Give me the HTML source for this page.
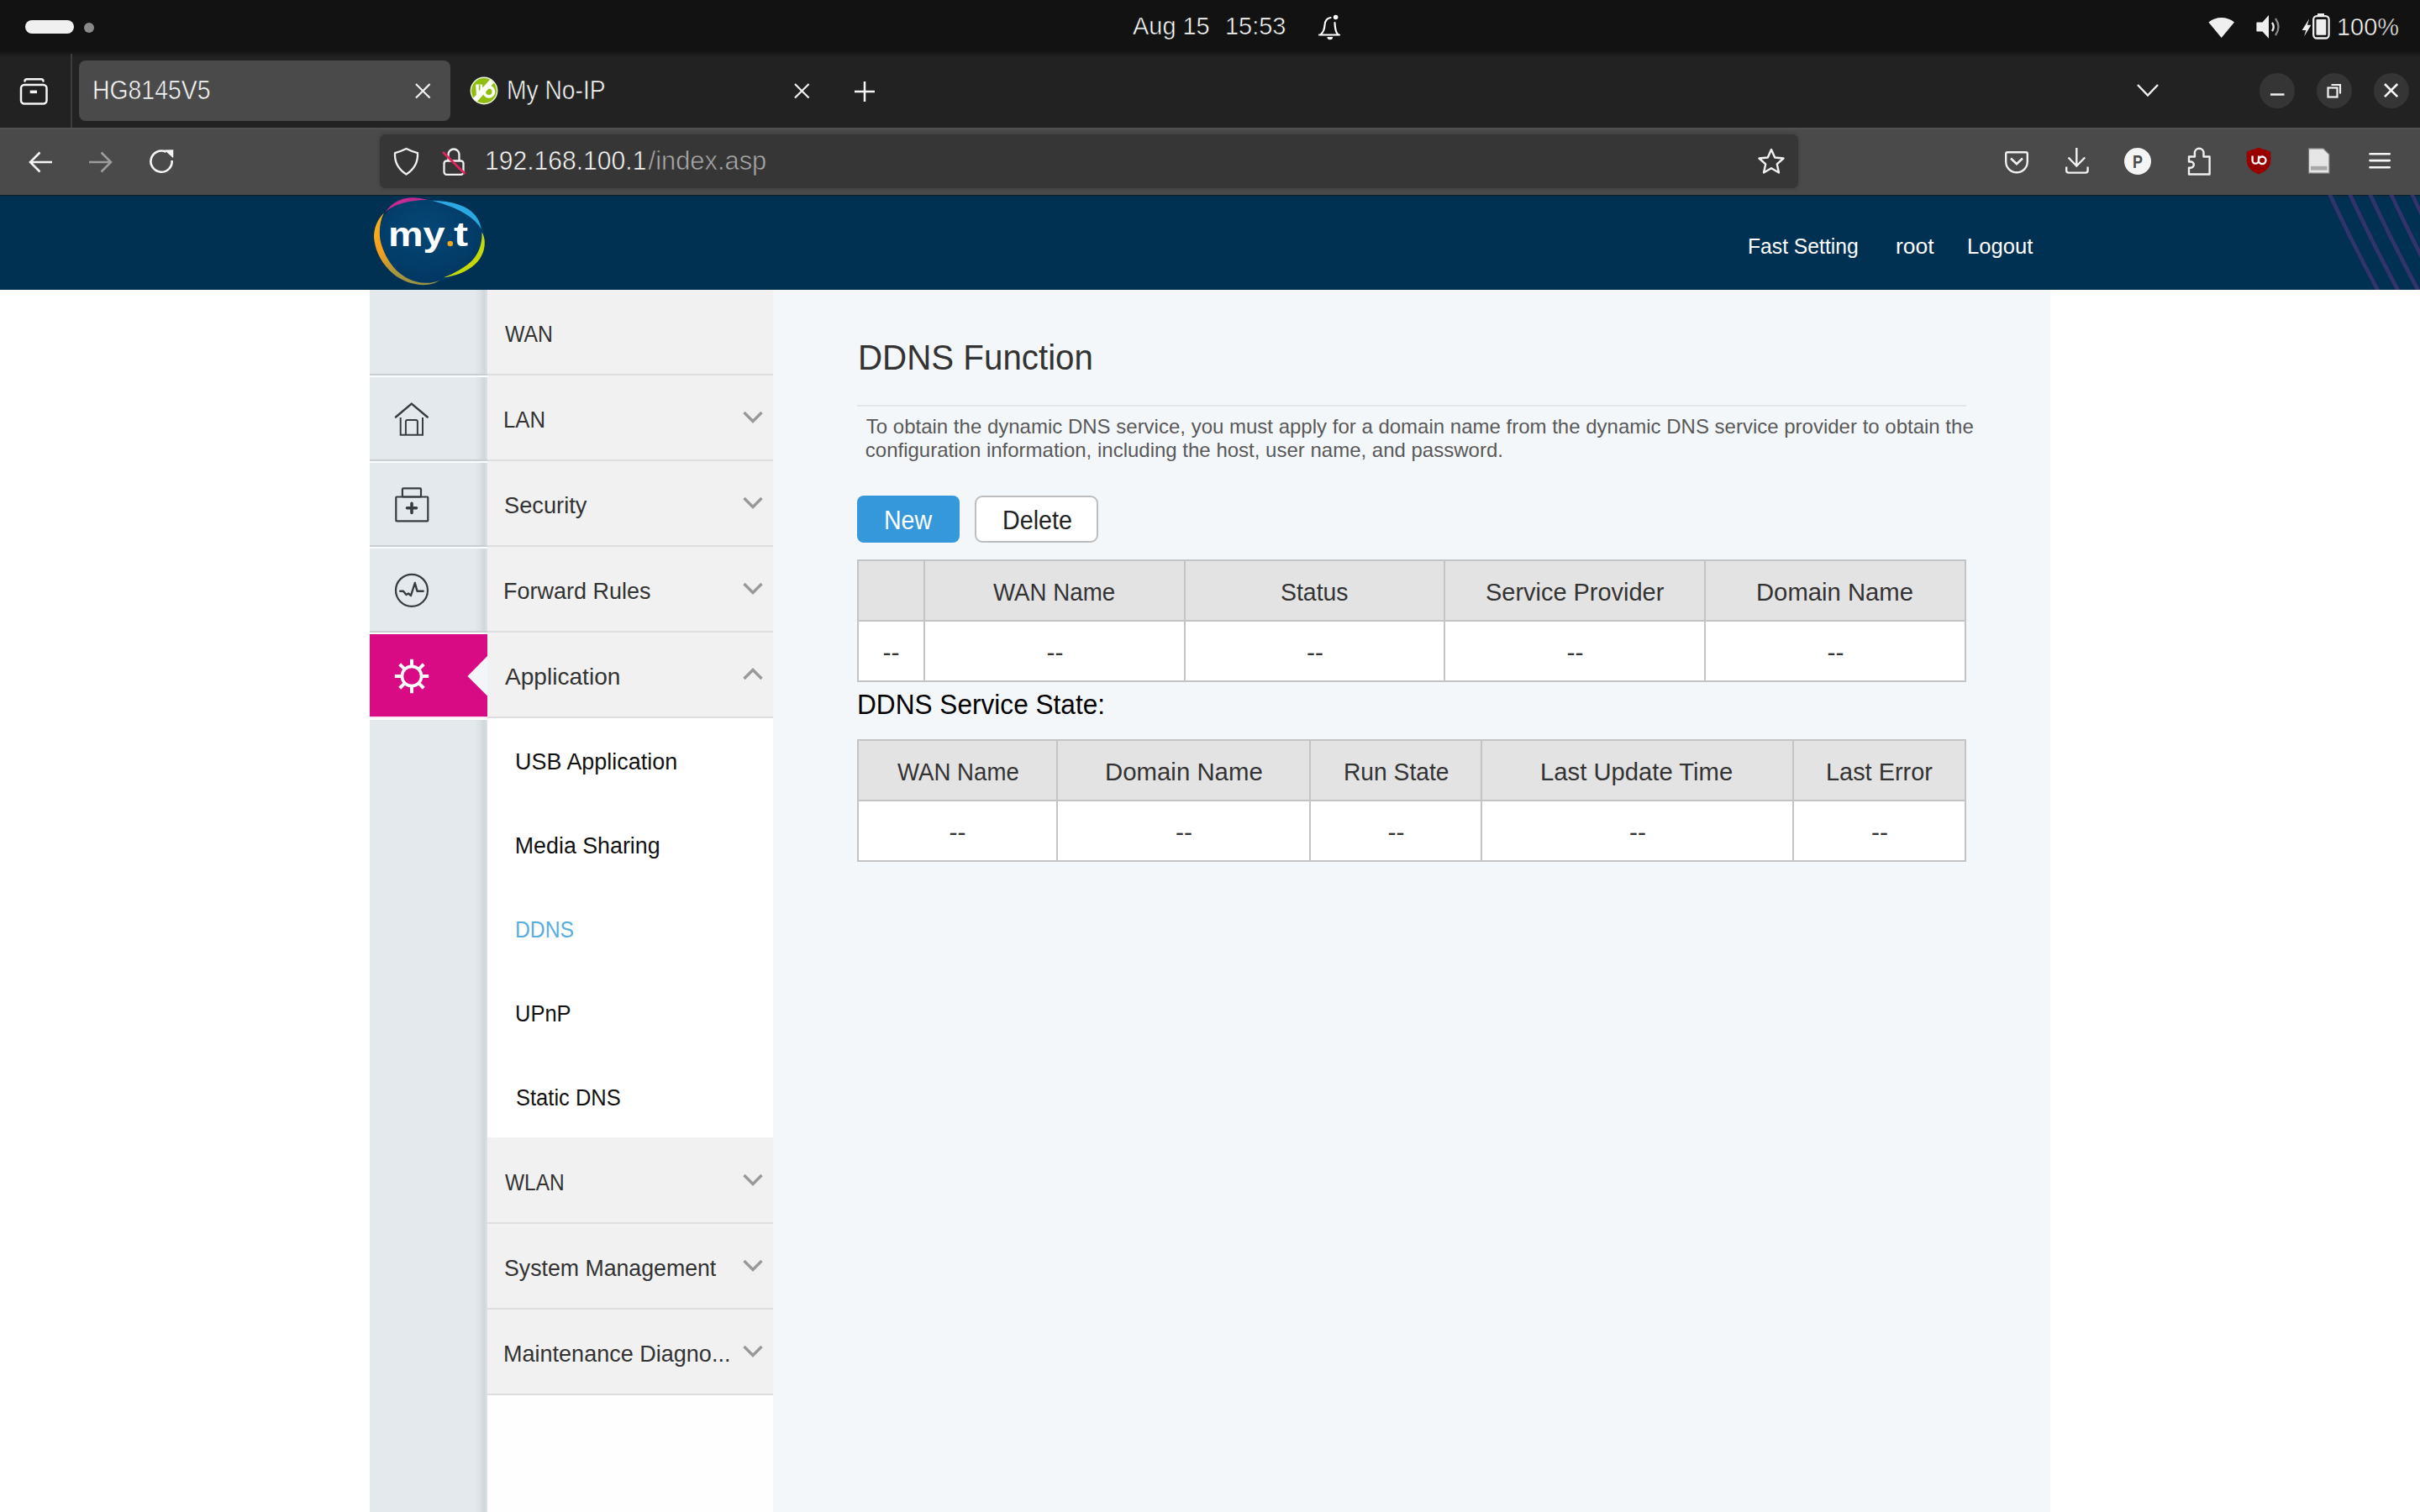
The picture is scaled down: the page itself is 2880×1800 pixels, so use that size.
<!DOCTYPE html>
<html><head><meta charset="utf-8"><title>HG8145V5</title>
<style>
html,body{margin:0;padding:0;}
body{width:2880px;height:1800px;overflow:hidden;position:relative;background:#fff;font-family:"Liberation Sans",sans-serif;}
.t{position:absolute;white-space:nowrap;transform-origin:0 0;font-family:"Liberation Sans",sans-serif;}
svg{overflow:visible}
</style></head><body>
<div style="position:absolute;left:0px;top:0px;width:2880px;height:63px;background:#121212;"></div>
<div style="position:absolute;left:30px;top:24px;width:58px;height:16px;background:#f0f0f0;border-radius:8px"></div>
<div style="position:absolute;left:100px;top:27px;width:12px;height:12px;background:#8a8a8a;border-radius:50%"></div>
<svg style="position:absolute;left:1566px;top:14px;" width="32" height="36" viewBox="0 0 32 36"><g fill="none" stroke="#fff" stroke-width="2.2" stroke-linecap="round"><path d="M4,27.5 H28"/><path d="M6,27 Q10,23 10.5,16 Q11,8 17.5,7"/><path d="M22.5,13 Q22.8,23 26,27"/></g><path d="M13.5,30 A3.3,3.3 0 0 0 20.1,30 Z" fill="#fff"/><circle cx="23.6" cy="6.5" r="2.8" fill="#fff"/></svg>
<svg style="position:absolute;left:2626px;top:17px;" width="36" height="30" viewBox="0 0 36 30"><path d="M17.7,28 L2.4,9.6 A24,24 0 0 1 33,9.6 Z" fill="#efefef"/></svg>
<svg style="position:absolute;left:2683px;top:16px;" width="34" height="32" viewBox="0 0 34 32"><path d="M3,10.5 H9.5 L17,2 V29.7 L9.5,21.5 H3 Q2,21.5 2.5,16 Q2,10.5 3,10.5 Z" fill="#efefef"/><path d="M21,11 Q24.5,16 21,21" fill="none" stroke="#efefef" stroke-width="2.3"/><path d="M25,6 Q32,16 25,26" fill="none" stroke="#8a8a8a" stroke-width="2.3"/></svg>
<svg style="position:absolute;left:2738px;top:14px;" width="38" height="34" viewBox="0 0 38 34"><path d="M10.2,8.3 L1.6,22 H6.3 L4.2,29.3 L12.4,15.8 H7.9 Z" fill="#efefef"/><rect x="20" y="2" width="8" height="3.2" fill="#efefef"/><rect x="15.2" y="5.2" width="18.4" height="26.3" rx="4" fill="none" stroke="#efefef" stroke-width="2.3"/><rect x="18.5" y="9" width="11.8" height="18.8" rx="1" fill="#efefef"/></svg>
<div style="position:absolute;left:0px;top:63px;width:2880px;height:89px;background:#222222;"></div>
<div style="position:absolute;left:0px;top:60px;width:2880px;height:8px;background:linear-gradient(#121212, #222222);"></div>
<svg style="position:absolute;left:20px;top:88px;" width="40" height="40" viewBox="0 0 40 40"><g fill="none" stroke="#f5f5f5" stroke-width="2.5" stroke-linecap="round"><rect x="5" y="13" width="30.5" height="22.5" rx="4"/><path d="M9.5,8.5 Q9.5,6.2 12,6.2 H29 Q31.5,6.2 31.5,8.5"/></g><rect x="15.7" y="19.6" width="8.3" height="3.5" fill="#f5f5f5"/></svg>
<div style="position:absolute;left:84px;top:64px;width:2px;height:88px;background:#3c3c3c;"></div>
<div style="position:absolute;left:94px;top:72px;width:442px;height:72px;background:#4a4a4a;border-radius:8px"></div>
<svg style="position:absolute;left:492.2px;top:96.7px;" width="22.6" height="22.6" viewBox="0 0 22.6 22.6"><path d="M3,3 L19.6,19.6 M19.6,3 L3,19.6" stroke="#f0f0f0" stroke-width="2.2" fill="none"/></svg>
<svg style="position:absolute;left:556px;top:88px;" width="40" height="40" viewBox="0 0 40 40"><circle cx="20" cy="20" r="15.7" fill="#8fbd10" stroke="#f0f8dc" stroke-width="1.4"/><path d="M10.2,12.5 H18 L19,24 L11,27 Z" fill="#fbfff5"/><rect x="13.8" y="13" width="1.6" height="6.5" fill="#8fbd10"/><path d="M9,31.5 L29.5,8.5" stroke="#fbfff5" stroke-width="6.2"/><circle cx="25.8" cy="21.2" r="5.6" fill="none" stroke="#fbfff5" stroke-width="3.8"/></svg>
<svg style="position:absolute;left:942.7px;top:96.7px;" width="22.6" height="22.6" viewBox="0 0 22.6 22.6"><path d="M3,3 L19.6,19.6 M19.6,3 L3,19.6" stroke="#f0f0f0" stroke-width="2.2" fill="none"/></svg>
<svg style="position:absolute;left:1014px;top:94px;" width="30" height="30" viewBox="0 0 30 30"><path d="M15,3 V27 M3,15 H27" stroke="#f5f5f5" stroke-width="2.5"/></svg>
<svg style="position:absolute;left:2540px;top:96px;" width="32" height="24" viewBox="0 0 32 24"><path d="M4,5 L16,17.5 L28,5" stroke="#f0f0f0" stroke-width="2.5" fill="none"/></svg>
<div style="position:absolute;left:2689px;top:87px;width:42px;height:42px;background:#353535;border-radius:50%"></div>
<div style="position:absolute;left:2757px;top:87px;width:42px;height:42px;background:#353535;border-radius:50%"></div>
<div style="position:absolute;left:2825px;top:87px;width:42px;height:42px;background:#353535;border-radius:50%"></div>
<svg style="position:absolute;left:2698px;top:100px;" width="24" height="20" viewBox="0 0 24 20"><path d="M4,12.5 H20.5" stroke="#f0f0f0" stroke-width="2.5"/></svg>
<svg style="position:absolute;left:2766px;top:96px;" width="24" height="24" viewBox="0 0 24 24"><rect x="4.5" y="8.5" width="11" height="11" fill="none" stroke="#f0f0f0" stroke-width="2.2"/><path d="M8.5,5 H19 V15.5" fill="none" stroke="#f0f0f0" stroke-width="2.2"/></svg>
<svg style="position:absolute;left:2835.4px;top:97.4px;" width="21.2" height="21.2" viewBox="0 0 21.2 21.2"><path d="M3,3 L18.2,18.2 M18.2,3 L3,18.2" stroke="#f5f5f5" stroke-width="2.6" fill="none"/></svg>
<div style="position:absolute;left:0px;top:152px;width:2880px;height:80px;background:#4a4a4a;"></div>
<div style="position:absolute;left:0px;top:152px;width:2880px;height:2px;background:#515151;"></div>
<svg style="position:absolute;left:30px;top:176px;" width="36" height="34" viewBox="0 0 36 34"><path d="M6,17 H32 M17.5,5.5 L6,17 L17.5,28.5" stroke="#f5f5f5" stroke-width="2.6" fill="none"/></svg>
<svg style="position:absolute;left:102px;top:176px;" width="36" height="34" viewBox="0 0 36 34"><path d="M4,17 H30 M18.5,5.5 L30,17 L18.5,28.5" stroke="#9c9c9c" stroke-width="2.6" fill="none"/></svg>
<svg style="position:absolute;left:174px;top:174px;" width="36" height="36" viewBox="0 0 36 36"><path d="M23.5,6.8 A12.6,12.6 0 1 0 30.6,17" stroke="#f5f5f5" stroke-width="2.6" fill="none"/><path d="M21.5,4.5 L32.3,4.3 L32.2,14.3 Z" fill="#f5f5f5"/></svg>
<div style="position:absolute;left:452px;top:160px;width:1688px;height:64px;background:#363636;border-radius:7px;box-shadow:0 0 4px 1px rgba(0,0,0,0.15)"></div>
<svg style="position:absolute;left:466px;top:173px;" width="36" height="38" viewBox="0 0 36 38"><path d="M17.5,4 C22,6.2 26,8 31,9.2 C31.6,20 27.5,28 17.5,34.5 C7.5,28 3.4,20 4,9.2 C9,8 13,6.2 17.5,4 Z" stroke="#f0f0f0" stroke-width="2.3" fill="none" stroke-linejoin="round"/></svg>
<svg style="position:absolute;left:522px;top:172px;" width="36" height="40" viewBox="0 0 36 40"><rect x="6.5" y="19.5" width="23" height="16.3" rx="3" fill="none" stroke="#f0f0f0" stroke-width="2.3"/><path d="M11.5,19.5 V12 A6.5,6.5 0 0 1 24.5,12 V19.5" fill="none" stroke="#f0f0f0" stroke-width="2.3"/><path d="M5,9 L31.5,35" stroke="#e0245a" stroke-width="2.8"/></svg>
<svg style="position:absolute;left:2088px;top:173px;" width="40" height="38" viewBox="0 0 40 38"><path d="M20,5 L24.2,14.5 L34.5,15.5 L26.8,22.4 L29,32.5 L20,27.3 L11,32.5 L13.2,22.4 L5.5,15.5 L15.8,14.5 Z" stroke="#f0f0f0" stroke-width="2.4" fill="none" stroke-linejoin="round"/></svg>
<svg style="position:absolute;left:2382px;top:176px;" width="36" height="34" viewBox="0 0 36 34"><path d="M5.2,7 Q5.2,5.2 7,5.2 H29 Q30.8,5.2 30.8,7 V16.5 A12.8,12.8 0 0 1 5.2,16.5 Z" stroke="#f0f0f0" stroke-width="2.4" fill="none"/><path d="M11,12.5 L18,19.2 L25,12.5" stroke="#f0f0f0" stroke-width="2.6" fill="none"/></svg>
<svg style="position:absolute;left:2454px;top:172px;" width="36" height="38" viewBox="0 0 36 38"><path d="M17.3,4 V25.5 M7.5,15.5 L17.3,25.5 L27.2,15.5" stroke="#f0f0f0" stroke-width="2.4" fill="none"/><path d="M5.2,26.5 V31 Q5.2,33.6 7.8,33.6 H28 Q30.6,33.6 30.6,31 V26.5" stroke="#f0f0f0" stroke-width="2.4" fill="none"/></svg>
<div style="position:absolute;left:2528px;top:176px;width:32px;height:32px;background:#f4f4f4;border-radius:50%"></div>
<svg style="position:absolute;left:2600px;top:172px;" width="36" height="40" viewBox="0 0 36 40"><path d="M5,35.5 H29.6 V14.5 H22.5 V10 A5.3,5.3 0 0 0 11.9,10 V14.5 H5 V20.5 H7.2 A3.6,3.6 0 0 1 7.2,27.7 H5 Z" stroke="#f0f0f0" stroke-width="2.4" fill="none" stroke-linejoin="round"/></svg>
<svg style="position:absolute;left:2670px;top:172px;" width="36" height="40" viewBox="0 0 36 40"><path d="M18,3.8 L32.3,8.6 V19.5 Q32,30 18,35.6 Q4,30 3.7,19.5 V8.6 Z" fill="#980000"/><path d="M10.6,13.5 V19 A3.7,3.7 0 0 0 18,19 V13.5" stroke="#fff" stroke-width="2.3" fill="none"/><circle cx="22.2" cy="18.8" r="4.3" stroke="#fff" stroke-width="2.3" fill="none"/></svg>
<svg style="position:absolute;left:2744px;top:173px;" width="32" height="36" viewBox="0 0 32 36"><path d="M3.5,3.8 H21 L28,10.8 V33.2 H3.5 Z" fill="#e6e6e6" stroke="#7a7a7a" stroke-width="1.2"/><rect x="6" y="24.8" width="19.5" height="4.8" fill="#a8a8a8"/></svg>
<svg style="position:absolute;left:2816px;top:178px;" width="32" height="26" viewBox="0 0 32 26"><path d="M4.5,5.3 H27.8 M4.5,13.1 H27.8 M4.5,21.2 H27.8" stroke="#f5f5f5" stroke-width="2.6" stroke-linecap="round"/></svg>
<div style="position:absolute;left:0px;top:232px;width:2880px;height:113px;background:#003152;"></div>
<div style="position:absolute;left:0px;top:232px;width:2880px;height:1px;background:#07202e;"></div>
<div style="position:absolute;left:0px;top:233px;width:2880px;height:1px;background:#0b2c44;"></div>
<svg style="position:absolute;left:2700px;top:232px;overflow:hidden" width="180" height="113" viewBox="0 0 180 113"><path d="M72,-2 Q97,52 130,114" stroke="#34336c" stroke-width="4.6" fill="none"/><path d="M96,-2 Q121,52 154,114" stroke="#34336c" stroke-width="4.6" fill="none"/><path d="M120,-2 Q145,52 178,114" stroke="#34336c" stroke-width="4.6" fill="none"/><path d="M145,-2 Q170,52 203,114" stroke="#34336c" stroke-width="4.6" fill="none"/><path d="M170,-2 Q195,52 228,114" stroke="#34336c" stroke-width="4.6" fill="none"/><path d="M194,-2 Q219,52 252,114" stroke="#34336c" stroke-width="4.6" fill="none"/></svg>
<svg style="position:absolute;left:440px;top:230px;" width="145" height="116" viewBox="0 0 145 116"><defs><radialGradient id="lg" cx="0.45" cy="0.35" r="0.75"><stop offset="0" stop-color="#064776"/><stop offset="1" stop-color="#00355f"/></radialGradient><linearGradient id="og" x1="0" y1="0" x2="0.6" y2="1"><stop offset="0" stop-color="#fbb21a"/><stop offset="0.45" stop-color="#f4a01c"/><stop offset="0.75" stop-color="#a79540"/><stop offset="1" stop-color="#9a9245"/></linearGradient></defs><path d="M12,40 C15,25 30,10 50,8 C75,6 100,10 120,22 C133,32 138,45 136,60 C132,80 110,97 86,104 C70,109 55,109 40,100 C25,90 12,72 9,55 C8,48 10,45 12,40 Z" fill="url(#lg)"/><path d="M18.7,22.2 Q35.4,-1.6 69.4,7.9 Q35.4,8 18.7,22.2 Z" fill="#c32a92"/><path d="M74,8.7 Q127.6,9.8 132.7,42.9 Q120.6,21 74,8.7 Z" fill="#2aa9e2"/><path d="M133.5,46.4 C139,55 138.5,72 126,84 C116,94 100,99 88,100.3 C100,96 114,88 122,80 C131,70 134,58 133.5,46.4 Z" fill="#c5d80a"/><path d="M17,23.4 C8,32 4,45 5.3,55 C7,70 15,85 28,96 C40,106 55,110 68,109 C75,108 80,106 83.7,103.4 C78,105.8 72,107 66,106.8 C52,106.3 42,101 32,92 C22,82 15,68 12.4,55 C11,45 12,33 17,23.4 Z" fill="url(#og)"/><circle cx="95.8" cy="60" r="3.3" fill="#f3a41b"/></svg>
<div style="position:absolute;left:0px;top:345px;width:2880px;height:1455px;background:#ffffff;"></div>
<div style="position:absolute;left:440px;top:345px;width:140px;height:1455px;background:#e3e9ec;"></div>
<div style="position:absolute;left:565px;top:345px;width:15px;height:1455px;background:linear-gradient(to right, rgba(0,20,40,0) 0%, rgba(0,20,40,0.03) 40%, rgba(0,20,40,0.075) 68%, rgba(0,20,40,0.08) 80%, rgba(0,20,40,0.03) 100%);"></div>
<div style="position:absolute;left:440px;top:445px;width:140px;height:2px;background:#c9ced2;"></div>
<div style="position:absolute;left:440px;top:447px;width:140px;height:2px;background:#fbfcfd;"></div>
<div style="position:absolute;left:440px;top:547px;width:140px;height:2px;background:#c9ced2;"></div>
<div style="position:absolute;left:440px;top:549px;width:140px;height:2px;background:#fbfcfd;"></div>
<div style="position:absolute;left:440px;top:649px;width:140px;height:2px;background:#c9ced2;"></div>
<div style="position:absolute;left:440px;top:651px;width:140px;height:2px;background:#fbfcfd;"></div>
<div style="position:absolute;left:440px;top:751px;width:140px;height:2px;background:#c9ced2;"></div>
<div style="position:absolute;left:440px;top:753px;width:140px;height:2px;background:#fbfcfd;"></div>
<div style="position:absolute;left:440px;top:755px;width:140px;height:98px;background:#d80b84;"></div>
<div style="position:absolute;left:440px;top:853px;width:140px;height:2px;background:#fce6f2;"></div>
<div style="position:absolute;left:440px;top:855px;width:140px;height:2px;background:#ffffff;"></div>
<svg style="position:absolute;left:550px;top:775px;" width="30" height="60" viewBox="0 0 30 60"><path d="M30,6 L6.4,30 L30,53.6 Z" fill="#f3f6f9"/></svg>
<div style="position:absolute;left:580px;top:345px;width:340px;height:101px;background:#f1f1f1;"></div>
<div style="position:absolute;left:580px;top:446px;width:340px;height:102px;background:#f1f1f1;"></div>
<div style="position:absolute;left:580px;top:548px;width:340px;height:102px;background:#f1f1f1;"></div>
<div style="position:absolute;left:580px;top:650px;width:340px;height:102px;background:#f1f1f1;"></div>
<div style="position:absolute;left:580px;top:752px;width:340px;height:102px;background:#f1f1f1;"></div>
<div style="position:absolute;left:580px;top:1354px;width:340px;height:102px;background:#f1f1f1;"></div>
<div style="position:absolute;left:580px;top:1456px;width:340px;height:102px;background:#f1f1f1;"></div>
<div style="position:absolute;left:580px;top:1558px;width:340px;height:102px;background:#f1f1f1;"></div>
<div style="position:absolute;left:580px;top:854px;width:340px;height:500px;background:#ffffff;"></div>
<div style="position:absolute;left:580px;top:1660px;width:340px;height:140px;background:#fefefe;"></div>
<div style="position:absolute;left:580px;top:445px;width:340px;height:2px;background:#dedede;"></div>
<div style="position:absolute;left:580px;top:547px;width:340px;height:2px;background:#dedede;"></div>
<div style="position:absolute;left:580px;top:649px;width:340px;height:2px;background:#dedede;"></div>
<div style="position:absolute;left:580px;top:751px;width:340px;height:2px;background:#dedede;"></div>
<div style="position:absolute;left:580px;top:853px;width:340px;height:2px;background:#dedede;"></div>
<div style="position:absolute;left:580px;top:1455px;width:340px;height:2px;background:#dedede;"></div>
<div style="position:absolute;left:580px;top:1557px;width:340px;height:2px;background:#dedede;"></div>
<div style="position:absolute;left:580px;top:1659px;width:340px;height:2px;background:#dedede;"></div>
<div style="position:absolute;left:920px;top:345px;width:1520px;height:1455px;background:#f4f7fa;"></div>
<svg style="position:absolute;left:460px;top:470px;" width="60" height="60" viewBox="0 0 60 60"><path d="M11,26.5 L29.8,10.6 L48.7,26.5" fill="none" stroke="#383c3f" stroke-width="2.5" stroke-linecap="round" stroke-linejoin="round"/><g fill="none" stroke="#383c3f" stroke-width="2"><path d="M16.7,27 V47.8 H43 V27"/><path d="M22.9,47.8 V32 Q22.9,30.1 24.9,30.1 H34.9 Q36.9,30.1 36.9,32 V47.8"/></g></svg>
<svg style="position:absolute;left:460px;top:570px;" width="60" height="60" viewBox="0 0 60 60"><g fill="none" stroke="#383c3f" stroke-width="2.2"><rect x="11.3" y="21.5" width="38" height="28.8" rx="0.8"/><rect x="18.9" y="11.4" width="22.1" height="10.1" rx="1"/></g><path d="M24.5,34.8 H35.5 M30,29.3 V40.5" stroke="#383c3f" stroke-width="3.6" stroke-linecap="round"/></svg>
<svg style="position:absolute;left:460px;top:673px;" width="60" height="60" viewBox="0 0 60 60"><circle cx="30" cy="29.8" r="19" fill="none" stroke="#383c3f" stroke-width="2.2"/><path d="M16.2,30.8 H20 L23.5,35 L26,33.5 L29,36 L33.8,21 L36.5,30.8 H43.7" fill="none" stroke="#383c3f" stroke-width="2.4" stroke-linejoin="round" stroke-linecap="round"/></svg>
<svg style="position:absolute;left:460px;top:775px;" width="60" height="60" viewBox="0 0 60 60"><circle cx="30" cy="30" r="11.6" fill="none" stroke="#fff" stroke-width="3.6"/><rect x="28" y="9.8" width="4" height="8" fill="#fff" transform="rotate(0 30 30)"/><rect x="28" y="9.8" width="4" height="8" fill="#fff" transform="rotate(45 30 30)"/><rect x="28" y="9.8" width="4" height="8" fill="#fff" transform="rotate(90 30 30)"/><rect x="28" y="9.8" width="4" height="8" fill="#fff" transform="rotate(135 30 30)"/><rect x="28" y="9.8" width="4" height="8" fill="#fff" transform="rotate(180 30 30)"/><rect x="28" y="9.8" width="4" height="8" fill="#fff" transform="rotate(225 30 30)"/><rect x="28" y="9.8" width="4" height="8" fill="#fff" transform="rotate(270 30 30)"/><rect x="28" y="9.8" width="4" height="8" fill="#fff" transform="rotate(315 30 30)"/></svg>
<svg style="position:absolute;left:880px;top:484px;" width="32" height="24" viewBox="0 0 32 24"><path d="M5.5,7 L16,17.5 L26.5,7" stroke="#999" stroke-width="3.4" fill="none"/></svg>
<svg style="position:absolute;left:880px;top:586px;" width="32" height="24" viewBox="0 0 32 24"><path d="M5.5,7 L16,17.5 L26.5,7" stroke="#999" stroke-width="3.4" fill="none"/></svg>
<svg style="position:absolute;left:880px;top:688px;" width="32" height="24" viewBox="0 0 32 24"><path d="M5.5,7 L16,17.5 L26.5,7" stroke="#999" stroke-width="3.4" fill="none"/></svg>
<svg style="position:absolute;left:880px;top:790px;" width="32" height="24" viewBox="0 0 32 24"><path d="M5.5,18 L16,7.5 L26.5,18" stroke="#999" stroke-width="3.4" fill="none"/></svg>
<svg style="position:absolute;left:880px;top:1392px;" width="32" height="24" viewBox="0 0 32 24"><path d="M5.5,7 L16,17.5 L26.5,7" stroke="#999" stroke-width="3.4" fill="none"/></svg>
<svg style="position:absolute;left:880px;top:1494px;" width="32" height="24" viewBox="0 0 32 24"><path d="M5.5,7 L16,17.5 L26.5,7" stroke="#999" stroke-width="3.4" fill="none"/></svg>
<svg style="position:absolute;left:880px;top:1596px;" width="32" height="24" viewBox="0 0 32 24"><path d="M5.5,7 L16,17.5 L26.5,7" stroke="#999" stroke-width="3.4" fill="none"/></svg>
<div style="position:absolute;left:1020px;top:482px;width:1320px;height:2px;background:#e2e5e9;"></div>
<div style="position:absolute;left:1020px;top:590px;width:122px;height:56px;background:#3498db;border-radius:8px"></div>
<div style="position:absolute;left:1160px;top:590px;width:147px;height:56px;box-sizing:border-box;border:2px solid #bdbdbd;border-radius:9px;background:#fff"></div>
<div style="position:absolute;left:1020px;top:667px;width:1319px;height:72px;background:#e3e3e3;"></div>
<div style="position:absolute;left:1020px;top:739px;width:1319px;height:72px;background:#ffffff;"></div>
<div style="position:absolute;left:1020px;top:666px;width:1319px;height:2px;background:#c4c4c4;"></div>
<div style="position:absolute;left:1020px;top:738px;width:1319px;height:2px;background:#c4c4c4;"></div>
<div style="position:absolute;left:1020px;top:810px;width:1319px;height:2px;background:#c4c4c4;"></div>
<div style="position:absolute;left:1020px;top:666px;width:2px;height:146px;background:#c4c4c4;"></div>
<div style="position:absolute;left:1099px;top:666px;width:2px;height:146px;background:#c4c4c4;"></div>
<div style="position:absolute;left:1409px;top:666px;width:2px;height:146px;background:#c4c4c4;"></div>
<div style="position:absolute;left:1718px;top:666px;width:2px;height:146px;background:#c4c4c4;"></div>
<div style="position:absolute;left:2028px;top:666px;width:2px;height:146px;background:#c4c4c4;"></div>
<div style="position:absolute;left:2338px;top:666px;width:2px;height:146px;background:#c4c4c4;"></div>
<div style="position:absolute;left:1020px;top:881px;width:1319px;height:72px;background:#e3e3e3;"></div>
<div style="position:absolute;left:1020px;top:953px;width:1319px;height:72px;background:#ffffff;"></div>
<div style="position:absolute;left:1020px;top:880px;width:1319px;height:2px;background:#c4c4c4;"></div>
<div style="position:absolute;left:1020px;top:952px;width:1319px;height:2px;background:#c4c4c4;"></div>
<div style="position:absolute;left:1020px;top:1024px;width:1319px;height:2px;background:#c4c4c4;"></div>
<div style="position:absolute;left:1020px;top:880px;width:2px;height:146px;background:#c4c4c4;"></div>
<div style="position:absolute;left:1257px;top:880px;width:2px;height:146px;background:#c4c4c4;"></div>
<div style="position:absolute;left:1558px;top:880px;width:2px;height:146px;background:#c4c4c4;"></div>
<div style="position:absolute;left:1762px;top:880px;width:2px;height:146px;background:#c4c4c4;"></div>
<div style="position:absolute;left:2133px;top:880px;width:2px;height:146px;background:#c4c4c4;"></div>
<div style="position:absolute;left:2338px;top:880px;width:2px;height:146px;background:#c4c4c4;"></div>
<div class="t" style="left:1348.40px;top:15.56px;font-size:30.29px;line-height:30.29px;color:#ffffff;-webkit-text-stroke:0.6px #121212;transform:scaleX(0.9555);z-index:5">Aug 15</div>
<div class="t" style="left:1458.09px;top:15.56px;font-size:30.29px;line-height:30.29px;color:#ffffff;-webkit-text-stroke:0.6px #121212;transform:scaleX(0.9556);z-index:5">15:53</div>
<div class="t" style="left:2781.08px;top:16.79px;font-size:30.14px;line-height:30.14px;color:#ffffff;-webkit-text-stroke:0.6px #121212;transform:scaleX(0.9601);z-index:5">100%</div>
<div class="t" style="left:109.97px;top:92.45px;font-size:31.01px;line-height:31.01px;color:#fbfbfb;-webkit-text-stroke:0.6px #4a4a4a;transform:scaleX(0.9158);z-index:5">HG8145V5</div>
<div class="t" style="left:602.88px;top:92.45px;font-size:31.01px;line-height:31.01px;color:#fbfbfb;-webkit-text-stroke:0.6px #222222;transform:scaleX(0.9099);z-index:5">My No-IP</div>
<div class="t" style="left:576.65px;top:177.37px;font-size:30.87px;line-height:30.87px;color:#fbfbfb;-webkit-text-stroke:0.6px #363636;transform:scaleX(0.9748);z-index:5">192.168.100.1</div>
<div class="t" style="left:771.60px;top:177.37px;font-size:30.87px;line-height:30.87px;color:#a9a9a9;-webkit-text-stroke:0.6px #363636;z-index:5">/index.asp</div>
<div class="t" style="left:2537.88px;top:182.00px;font-size:21.74px;line-height:21.74px;color:#4a4a4a;font-weight:bold;transform:scaleX(0.8231);z-index:6">P</div>
<div class="t" style="left:461.66px;top:259.34px;font-size:40px;line-height:40px;color:#ffffff;font-weight:bold;transform:scaleX(1.1703);z-index:6">my</div>
<div class="t" style="left:539.80px;top:259.34px;font-size:40px;line-height:40px;color:#ffffff;font-weight:bold;transform:scaleX(1.2769);z-index:6">t</div>
<div class="t" style="left:2079.94px;top:280.55px;font-size:25.22px;line-height:25.22px;color:#ffffff;transform:scaleX(0.9784);z-index:5">Fast Setting</div>
<div class="t" style="left:2255.65px;top:280.55px;font-size:25.22px;line-height:25.22px;color:#ffffff;transform:scaleX(1.0507);z-index:5">root</div>
<div class="t" style="left:2341.37px;top:280.55px;font-size:25.22px;line-height:25.22px;color:#ffffff;transform:scaleX(1.0143);z-index:5">Logout</div>
<div class="t" style="left:601.00px;top:383.87px;font-size:27.68px;line-height:27.68px;color:#333333;transform:scaleX(0.8952);z-index:5">WAN</div>
<div class="t" style="left:599.14px;top:485.87px;font-size:27.68px;line-height:27.68px;color:#333333;transform:scaleX(0.9288);z-index:5">LAN</div>
<div class="t" style="left:600.02px;top:587.87px;font-size:27.68px;line-height:27.68px;color:#333333;transform:scaleX(0.9846);z-index:5">Security</div>
<div class="t" style="left:599.05px;top:689.87px;font-size:27.68px;line-height:27.68px;color:#333333;transform:scaleX(0.9747);z-index:5">Forward Rules</div>
<div class="t" style="left:601.00px;top:791.87px;font-size:27.68px;line-height:27.68px;color:#333333;transform:scaleX(1.0150);z-index:5">Application</div>
<div class="t" style="left:601.00px;top:1393.87px;font-size:27.68px;line-height:27.68px;color:#333333;transform:scaleX(0.8850);z-index:5">WLAN</div>
<div class="t" style="left:600.04px;top:1495.87px;font-size:27.68px;line-height:27.68px;color:#333333;transform:scaleX(0.9648);z-index:5">System Management</div>
<div class="t" style="left:599.05px;top:1597.87px;font-size:27.68px;line-height:27.68px;color:#333333;transform:scaleX(0.9766);z-index:5">Maintenance Diagno...</div>
<div class="t" style="left:612.79px;top:894.11px;font-size:26.81px;line-height:26.81px;color:#111111;transform:scaleX(1.0051);z-index:5">USB Application</div>
<div class="t" style="left:612.80px;top:994.11px;font-size:26.81px;line-height:26.81px;color:#111111;z-index:5">Media Sharing</div>
<div class="t" style="left:612.95px;top:1094.11px;font-size:26.81px;line-height:26.81px;color:#5aade0;transform:scaleX(0.9226);z-index:5">DDNS</div>
<div class="t" style="left:612.90px;top:1194.11px;font-size:26.81px;line-height:26.81px;color:#111111;transform:scaleX(0.9519);z-index:5">UPnP</div>
<div class="t" style="left:613.85px;top:1294.11px;font-size:26.81px;line-height:26.81px;color:#111111;transform:scaleX(0.9523);z-index:5">Static DNS</div>
<div class="t" style="left:1020.63px;top:404.90px;font-size:42.17px;line-height:42.17px;color:#333333;transform:scaleX(0.9558);z-index:5">DDNS Function</div>
<div class="t" style="left:1030.80px;top:495.88px;font-size:24px;line-height:24px;color:#595959;z-index:5">To obtain the dynamic DNS service, you must apply for a domain name from the dynamic DNS service provider to obtain the</div>
<div class="t" style="left:1029.80px;top:523.58px;font-size:24px;line-height:24px;color:#595959;z-index:5">configuration information, including the host, user name, and password.</div>
<div class="t" style="left:1052.14px;top:604.50px;font-size:30.72px;line-height:30.72px;color:#ffffff;transform:scaleX(0.9292);z-index:5">New</div>
<div class="t" style="left:1192.63px;top:604.50px;font-size:30.72px;line-height:30.72px;color:#222222;transform:scaleX(0.9334);z-index:5">Delete</div>
<div class="t" style="left:1182.00px;top:689.76px;font-size:30.29px;line-height:30.29px;color:#333333;transform:scaleX(0.9147);z-index:5">WAN Name</div>
<div class="t" style="left:1524.16px;top:689.76px;font-size:30.29px;line-height:30.29px;color:#333333;transform:scaleX(0.9385);z-index:5">Status</div>
<div class="t" style="left:1768.04px;top:689.76px;font-size:30.29px;line-height:30.29px;color:#333333;transform:scaleX(0.9559);z-index:5">Service Provider</div>
<div class="t" style="left:2090.17px;top:689.76px;font-size:30.29px;line-height:30.29px;color:#333333;transform:scaleX(0.9660);z-index:5">Domain Name</div>
<div class="t" style="left:1050.50px;top:762.11px;font-size:30px;line-height:30px;color:#333333;z-index:5">--</div>
<div class="t" style="left:1245.50px;top:762.11px;font-size:30px;line-height:30px;color:#333333;z-index:5">--</div>
<div class="t" style="left:1555.00px;top:762.11px;font-size:30px;line-height:30px;color:#333333;z-index:5">--</div>
<div class="t" style="left:1864.50px;top:762.11px;font-size:30px;line-height:30px;color:#333333;z-index:5">--</div>
<div class="t" style="left:2174.50px;top:762.11px;font-size:30px;line-height:30px;color:#333333;z-index:5">--</div>
<div class="t" style="left:1020.04px;top:821.07px;font-size:34.06px;line-height:34.06px;color:#000000;transform:scaleX(0.9282);z-index:5">DDNS Service State:</div>
<div class="t" style="left:1067.80px;top:903.76px;font-size:30.29px;line-height:30.29px;color:#333333;transform:scaleX(0.9121);z-index:5">WAN Name</div>
<div class="t" style="left:1314.96px;top:903.76px;font-size:30.29px;line-height:30.29px;color:#333333;transform:scaleX(0.9702);z-index:5">Domain Name</div>
<div class="t" style="left:1599.14px;top:903.76px;font-size:30.29px;line-height:30.29px;color:#333333;transform:scaleX(0.9315);z-index:5">Run State</div>
<div class="t" style="left:1833.47px;top:903.76px;font-size:30.29px;line-height:30.29px;color:#333333;transform:scaleX(0.9658);z-index:5">Last Update Time</div>
<div class="t" style="left:2172.69px;top:903.76px;font-size:30.29px;line-height:30.29px;color:#333333;transform:scaleX(0.9545);z-index:5">Last Error</div>
<div class="t" style="left:1129.50px;top:976.11px;font-size:30px;line-height:30px;color:#333333;z-index:5">--</div>
<div class="t" style="left:1399.00px;top:976.11px;font-size:30px;line-height:30px;color:#333333;z-index:5">--</div>
<div class="t" style="left:1651.50px;top:976.11px;font-size:30px;line-height:30px;color:#333333;z-index:5">--</div>
<div class="t" style="left:1939.00px;top:976.11px;font-size:30px;line-height:30px;color:#333333;z-index:5">--</div>
<div class="t" style="left:2227.00px;top:976.11px;font-size:30px;line-height:30px;color:#333333;z-index:5">--</div>
</body></html>
